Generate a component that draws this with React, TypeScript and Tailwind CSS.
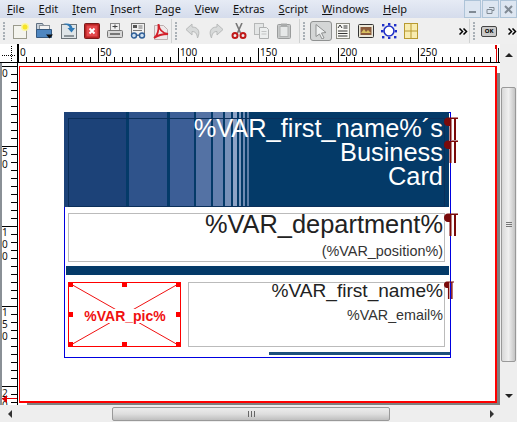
import React from "react";

const menus: [string, string][] = [
  ["F", "ile"], ["E", "dit"], ["I", "tem"], ["I", "nsert"], ["P", "age"], ["V", "iew"],
  ["E", "xtras"], ["S", "cript"], ["W", "indows"], ["H", "elp"],
];

function Grip() {
  return (
    <div className="w-[3px] h-[22px] mx-[3px] flex flex-col justify-between py-[2px]">
      {[0, 1, 2, 3, 4, 5].map((i) => (
        <div key={i} className="w-[2px] h-[2px] bg-[#a9b0b6]" />
      ))}
    </div>
  );
}

function NewIcon() {
  return (
    <svg width="16" height="16" viewBox="0 0 16 16">
      <rect x="0.5" y="2.5" width="13" height="13" fill="#f4f4ee" stroke="#9a9a8c" />
      <circle cx="12" cy="4" r="4" fill="#fbf6a0" />
      <circle cx="12" cy="4" r="2.500" fill="#f6e428" />
    </svg>
  );
}
function OpenIcon() {
  return (
    <svg width="18" height="16" viewBox="0 0 18 16">
      <path d="M.5 .5h6l1 2h5v5h-12z" fill="#c8d0d8" stroke="#5f6f80" />
      <rect x="3.500" y="2.500" width="10" height="5" fill="#f2f2f2" stroke="#8a9299" />
      <path d="M.5 6.500h15v8h-15z" fill="#4e86c0" stroke="#34587f" />
      <path d="M10 11.500h7l-3.500 4z" fill="#111" />
    </svg>
  );
}
function SaveIcon() {
  return (
    <svg width="16" height="16" viewBox="0 0 16 16">
      <rect x="0.5" y="1.5" width="15" height="14" fill="#dfe5e8" stroke="#6b7378" />
      <rect x="3" y="12" width="10" height="2" fill="#8b9499" />
      <path d="M2 1c6-1.500 9 .5 9.500 4H14l-3.500 4.500L6.500 5h2C8.500 3 6 1.500 2 1z" fill="#2f79b5" />
    </svg>
  );
}
function CloseDocIcon() {
  return (
    <svg width="16" height="16" viewBox="0 0 16 16">
      <rect x="0.5" y="0.5" width="15" height="15" rx="1" fill="#b92323" stroke="#7a1a1a" />
      <rect x="2.5" y="2.5" width="11" height="11" fill="#e4484c" />
      <path d="M5.500 5.500l5 5M10.500 5.500l-5 5" stroke="#fff" strokeWidth="2" />
    </svg>
  );
}
function PrintIcon() {
  return (
    <svg width="16" height="16" viewBox="0 0 16 16">
      <rect x="3.5" y="0.5" width="9" height="7" fill="#f0f0f0" stroke="#8a8a8a" />
      <rect x="0.5" y="7.5" width="15" height="7" rx="1" fill="#d8d8d8" stroke="#777" />
      <path d="M5.500 3.500h5M8 1.500v4" stroke="#444" />
      <rect x="3" y="10" width="10" height="2" fill="#777" />
    </svg>
  );
}
function PreviewIcon() {
  return (
    <svg width="16" height="16" viewBox="0 0 16 16">
      <rect x="1.500" y="0.500" width="13" height="12" fill="#f0f0f0" stroke="#777" />
      <rect x="3" y="2" width="4" height="3" fill="#555" />
      <path d="M8.500 3h4M8.500 5h4M3 7.500h9" stroke="#777" />
      <circle cx="4" cy="12.500" r="2.500" fill="#cfe0f0" stroke="#2f5f98" strokeWidth="1.400" />
      <circle cx="12" cy="12.500" r="2.500" fill="#cfe0f0" stroke="#2f5f98" strokeWidth="1.400" />
      <path d="M6 12h4" stroke="#2f5f98" />
    </svg>
  );
}
function PdfIcon() {
  return (
    <svg width="16" height="17" viewBox="0 0 16 17">
      <path d="M1.500 2.500h9l4 4v10h-13z" fill="#eee8e8" stroke="#bcaeae" />
      <path d="M1 15c3-2 5-6 4.500-14C6 6 9 10 15 11c-5 0-10 1-14 4z" fill="none" stroke="#d3202a" strokeWidth="1.800" />
    </svg>
  );
}
function ArrowIcon({ flip }: { flip?: boolean }) {
  return (
    <svg width="16" height="16" viewBox="0 0 16 16" className={flip ? "-scale-x-100" : ""}>
      <path d="M7 1L1 6.500 7 12V8.500c3 0 5 1.500 5.500 6.500 3-6 1-11-5.500-11z" fill="#d8dada" stroke="#b8baba" />
    </svg>
  );
}
function CutIcon() {
  return (
    <svg width="16" height="16" viewBox="0 0 16 16">
      <path d="M5 0l4.500 10M11 0L6.500 10" stroke="#777" strokeWidth="1.600" />
      <circle cx="4" cy="12.500" r="2.500" fill="none" stroke="#c01818" strokeWidth="2" />
      <circle cx="12" cy="12.500" r="2.500" fill="none" stroke="#c01818" strokeWidth="2" />
    </svg>
  );
}
function CopyIcon() {
  return (
    <svg width="16" height="16" viewBox="0 0 16 16">
      <rect x="0.500" y="0.500" width="9" height="11" fill="#e4e6e6" stroke="#b6b8b8" />
      <path d="M5.500 4.500h7l2 2v9h-9z" fill="#eceeee" stroke="#aeb0b0" />
      <path d="M7.500 8.500h5M7.500 11h5" stroke="#c2c4c4" />
    </svg>
  );
}
function PasteIcon() {
  return (
    <svg width="14" height="16" viewBox="0 0 14 16">
      <rect x="0.500" y="1.500" width="13" height="14" rx="1" fill="#c6c8c8" stroke="#9a9c9c" />
      <rect x="3" y="3.500" width="8" height="10" fill="#e6e8e8" stroke="#b0b2b2" />
      <rect x="4" y="0.500" width="6" height="3" fill="#a8aaaa" />
    </svg>
  );
}
function SelectIcon() {
  return (
    <svg width="14" height="16" viewBox="0 0 14 16">
      <path d="M2 1.500l10 8-4.500.500 2.500 5-2 1-2.500-5L2 13.500z" fill="#eef0f0" stroke="#8e9090" />
    </svg>
  );
}
function TextFrameIcon() {
  return (
    <svg width="14" height="16" viewBox="0 0 14 16">
      <rect x="0.500" y="0.500" width="13" height="15" fill="#f8f8f4" stroke="#8a8a80" />
      <path d="M2 5l2-3 2 3M7.500 3h4M7.500 5h4M2 8h9.500M2 10.500h9.500M2 13h9.500" fill="none" stroke="#333" />
    </svg>
  );
}
function ImageFrameIcon() {
  return (
    <svg width="16" height="14" viewBox="0 0 16 14">
      <rect x="0.500" y="0.500" width="15" height="13" rx="1" fill="#ece8d8" stroke="#333" />
      <rect x="2.500" y="3" width="11" height="8" fill="#8a5a3c" />
      <path d="M3 9l3-4 2 3 2-2 3 3z" fill="#d8c060" />
    </svg>
  );
}
function ShapeIcon() {
  return (
    <svg width="16" height="16" viewBox="0 0 16 16">
      <circle cx="8" cy="8" r="5" fill="#fff" stroke="#2030c8" strokeWidth="1.600" />
      {[[1, 1], [7, 0], [13, 1], [0, 7], [14, 7], [1, 13], [7, 14], [13, 13]].map(([x, y], i) => (
        <rect key={i} x={x} y={y} width="2.400" height="2.400" fill="#2030c8" />
      ))}
    </svg>
  );
}
function TableIcon() {
  return (
    <svg width="14" height="16" viewBox="0 0 14 16">
      <rect x="0.500" y="0.500" width="13" height="15" fill="#f8ecb0" stroke="#b89a30" />
      <path d="M7 .500v15M.500 8h13" stroke="#b89a30" />
    </svg>
  );
}

function Chevrons() {
  return (
    <svg width="9" height="7" viewBox="0 0 9 7">
      <path d="M.5 .5L3.500 3.500 .5 6.500M4.500 .5L7.500 3.500 4.500 6.500" fill="none" stroke="#000" strokeWidth="1.500" />
    </svg>
  );
}

function Toolbar() {
  return (
    <div className="h-[26px] flex items-center bg-[#efefef]">
      <Grip />
      <div className="flex items-center gap-[7px] pl-[4px] w-[163px]">
        <NewIcon /><OpenIcon /><SaveIcon /><CloseDocIcon /><PrintIcon /><PreviewIcon /><PdfIcon />
      </div>
      <div className="w-px h-[24px] bg-[#d0d2d2]" />
      <Grip />
      <div className="flex items-center gap-[7px] pl-[4px] w-[118px]">
        <ArrowIcon /><ArrowIcon flip /><CutIcon /><CopyIcon /><PasteIcon />
      </div>
      <div className="w-px h-[24px] bg-[#d0d2d2]" />
      <Grip />
      <div className="flex items-center pl-[1px] w-[161px]">
        <div className="w-[22px] h-[20px] rounded-[3px] border border-[#8f9191] bg-[#d4d6d6] flex items-center justify-center mr-[4px]">
          <SelectIcon />
        </div>
        <TextFrameIcon />
        <div className="ml-[8px]"><ImageFrameIcon /></div>
        <div className="ml-[7px]"><ShapeIcon /></div>
        <div className="ml-[7px]"><TableIcon /></div>
        <div className="ml-[41px] flex"><Chevrons /></div>
      </div>
      <div className="w-px h-[24px] bg-[#d0d2d2]" />
      <Grip />
      <div className="w-[16px] h-[11px] rounded-[2px] border border-[#444] bg-[#c9c9c9] ml-[2px] text-[6px] font-bold leading-[9px] text-center text-black">OK</div>
      <div className="ml-[11px] flex"><Chevrons /></div>
    </div>
  );
}

function WindowButtons() {
  return (
    <div className="flex gap-px self-start">
      {["min", "restore", "close"].map((b) => (
        <div key={b} className="w-[17px] h-[18px] border border-[#aec4d8] bg-[#dde6f1] flex items-center justify-center">
          <svg width="9" height="9" viewBox="0 0 9 9">
            {b === "min" && <rect x="1" y="6" width="7" height="2" fill="#808a94" />}
            {b === "restore" && <path d="M3 2.500h5v3H6M1 4.500h5v4H1z" fill="none" stroke="#808a94" />}
            {b === "close" && <path d="M1 1l7 7M8 1L1 8" stroke="#808a94" strokeWidth="2" />}
          </svg>
        </div>
      ))}
    </div>
  );
}

function MenuBar() {
  return (
    <div className="h-[18px] flex justify-between bg-gradient-to-b from-[#e6ebf5] to-[#d5dcec]">
      <div className="flex gap-[14px] pl-[7px] pt-[1px] text-[11px] leading-[15px] text-[#111]">
        {menus.map(([k, rest]) => (
          <span key={k + rest}>
            <span className="underline">{k}</span>
            {rest}
          </span>
        ))}
      </div>
      <WindowButtons />
    </div>
  );
}

function TopRuler() {
  const ticks = Array.from({ length: 61 }, (_, i) => i);
  return (
    <div className="relative h-[19px] flex-1 bg-white border-b border-black overflow-hidden">
      {ticks.map((i) => (
        <div
          key={i}
          className={`absolute bottom-0 w-px bg-black ${i === 0 ? "h-[18px]" : i % 10 === 0 ? "h-[14px]" : "h-[5px]"}`}
          style={{ left: i * 8 }}
        />
      ))}
      {[0, 50, 100, 150, 200, 250].map((n, i) => (
        <span key={n} className="absolute top-[3px] text-[10px] leading-[10px] text-[#111]" style={{ left: i * 80 + 2 }}>
          {n}
        </span>
      ))}
      <div className="absolute left-[477px] top-[1px] w-[2px] h-[4px] bg-[#e00000]" />
      <div className="absolute left-[478px] top-[1px] w-px h-[17px] bg-[#e00000]" />
    </div>
  );
}

function LeftRuler() {
  const ticks = Array.from({ length: 43 }, (_, i) => i);
  // vertical ruler numbers stack one digit per line
  const labels: [number, string][] = [[4, "0"], [83, "5\n0"], [163, "1\n0\n0"], [243, "1\n5\n0"], [324, "2\n0"]];
  return (
    <div className="relative w-[18px] bg-white border-l-2 border-l-[#8a9096] border-r border-r-black overflow-hidden">
      {ticks.map((i) => (
        <div
          key={i}
          className={`absolute right-0 h-px bg-black ${i % 10 === 0 ? "w-[15px]" : "w-[6px]"}`}
          style={{ top: i * 8 + 3 }}
        />
      ))}
      {labels.map(([top, digits]) => (
        <div key={top} className="absolute left-0 whitespace-pre-line text-[10px] leading-[12px] text-[#111]" style={{ top }}>
          {digits}
        </div>
      ))}
      <div className="absolute left-0 top-[335px] w-[15px] h-px bg-[#e00000]" />
      <div className="absolute left-0 top-[332px] w-0 h-0 border-y-[4px] border-y-transparent border-r-[5px] border-r-[#e00000]" />
    </div>
  );
}

function Pilcrow({ className, small }: { className: string; small?: boolean }) {
  return (
    <svg
      width={small ? 10 : 14}
      height={small ? 18 : 23}
      viewBox="0 0 14 23"
      preserveAspectRatio="none"
      className={`absolute ${className}`}
    >
      <path d="M4 .5H14V2H12V23H10V2H7.500V23H5.500V9H4C1.500 9 0 7 0 4.700 0 2.300 1.700 .5 4 .5Z" fill="#7a0a0a" />
    </svg>
  );
}

function CardHeader() {
  const stripes: [number, number, string][] = [
    [64, 126, "#1c4278"], [129, 167, "#2f538b"], [170, 194, "#3c5e96"], [196, 211, "#5472a4"], [213, 223, "#6480ae"],
    [225, 231, "#7790b8"], [233, 237, "#8ea3c6"], [239, 241, "#7f98bd"], [243, 245, "#6f8bb4"], [247, 249, "#5f7ea8"],
  ];
  return (
    <div className="absolute left-[64px] top-[112px] w-[385px] h-[95px] bg-[#043a68] overflow-hidden">
      {stripes.map(([start, end, c]) => (
        <div key={start} className="absolute top-0 bottom-0" style={{ left: start - 64, width: end - start, background: c }} />
      ))}
      <div className="absolute left-[4px] top-[6px] right-[4px] bottom-0 border border-[#0b2f5a]" />
      <div className="absolute right-[6px] top-[4px] text-right text-[25.4px] leading-[24px] text-white font-['Liberation_Sans']">
        <div>%VAR_first_name%´s</div>
        <div>Business</div>
        <div>Card</div>
      </div>
    </div>
  );
}

function PicFrame() {
  const handles = [
    "left-0 top-0", "left-[54px] top-0", "left-[108px] top-0",
    "left-0 top-[30px]", "left-[108px] top-[30px]",
    "left-0 top-[60px]", "left-[54px] top-[60px]", "left-[108px] top-[60px]",
  ];
  return (
    <div className="absolute left-[68px] top-[282px] w-[113px] h-[65px] border border-[#ff0000] bg-white">
      <svg className="absolute inset-0" width="111" height="63" viewBox="0 0 111 63">
        <path d="M0 0L111 63M111 0L0 63" stroke="#f01010" strokeWidth="1" />
      </svg>
      <div className="absolute left-[14px] top-[26px] w-[84px] bg-white text-center text-[14px] leading-[14px] font-bold text-[#f01010] font-['Liberation_Sans']">
        %VAR_pic%
      </div>
      {handles.map((h) => (
        <div key={h} className={`absolute ${h} -ml-px -mt-px w-[5px] h-[5px] bg-[#ff0000]`} />
      ))}
    </div>
  );
}

function Page() {
  return (
    <div className="relative flex-1 bg-white overflow-hidden">
      {/* page objects are placed in window coordinates */}
      <div className="absolute left-[-18px] top-[-63px] w-[517px] h-[422px]">
        <div className="absolute left-[27px] top-[73px] w-[473px] h-[332px] bg-[#808080]" />
        <div className="absolute left-[19px] top-[66px] w-[478px] h-[337px] bg-white border border-[#ff0000] border-b-2 border-r-2" />
        <div className="absolute left-[64px] top-[112px] w-[387px] h-[246px] border border-[#0000e0]" />
        <CardHeader />
        <div className="absolute left-[68px] top-[213px] w-[377px] h-[49px] border border-[#bbbbbb]" />
        <div className="absolute right-[74px] top-[209px] text-[25.4px] leading-[30px] text-[#222] font-['Liberation_Sans']">
          %VAR_department%
        </div>
        <div className="absolute right-[74px] top-[243px] text-[14.4px] leading-[17px] text-[#333] font-['Liberation_Sans']">
          (%VAR_position%)
        </div>
        <div className="absolute left-[66px] top-[266px] w-[383px] h-[9px] bg-[#043a68]" />
        <PicFrame />
        <div className="absolute left-[188px] top-[282px] w-[257px] h-[65px] border border-[#bbbbbb]" />
        <div className="absolute right-[74px] top-[279px] text-[19.1px] leading-[23px] text-[#222] font-['Liberation_Sans']">
          %VAR_first_name%
        </div>
        <div className="absolute right-[74px] top-[307px] text-[14.3px] leading-[17px] text-[#333] font-['Liberation_Sans']">
          %VAR_email%
        </div>
        <div className="absolute left-[269px] top-[352px] w-[181px] h-[3px] bg-[#1c4f7c]" />
        <Pilcrow className="left-[444px] top-[117px]" />
        <Pilcrow className="left-[444px] top-[140px]" />
        <Pilcrow className="left-[444px] top-[213px]" />
        <Pilcrow small className="left-[444px] top-[281px]" />
      </div>
    </div>
  );
}

function VScroll() {
  return (
    <div className="w-[17px] bg-[#eeeeee] flex flex-col items-center">
      <div className="h-[43px] flex items-start justify-center pt-[9px]">
        <div className="w-0 h-0 border-x-[4px] border-x-transparent border-b-[4px] border-b-[#222]" />
      </div>
      <div className="h-[275px] w-[15px] border border-[#999] rounded-[2px] bg-gradient-to-r from-[#d8d8d8] via-[#f0f0f0] to-[#c4c4c4] flex flex-col items-center justify-center gap-[1px]">
        <div className="h-px w-[6px] bg-[#777]" />
        <div className="h-px w-[6px] bg-[#777]" />
        <div className="h-px w-[6px] bg-[#777]" />
      </div>
      <div className="flex-1 flex items-end pb-[24px]">
        <div className="w-0 h-0 border-x-[4px] border-x-transparent border-t-[4px] border-t-[#222]" />
      </div>
    </div>
  );
}

function HScroll() {
  return (
    <div className="h-[17px] bg-[#eeeeee] flex items-center">
      <div className="w-[12px] flex justify-end">
        <div className="w-0 h-0 border-y-[4px] border-y-transparent border-r-[4px] border-r-[#333]" />
      </div>
      <div className="w-[100px]" />
      <div className="h-[14px] w-[278px] border border-[#999] rounded-[2px] bg-gradient-to-b from-[#ececec] via-[#dedede] to-[#bfbfbf] flex items-center justify-center gap-[2px]">
        <div className="w-px h-[6px] bg-[#666]" />
        <div className="w-px h-[6px] bg-[#666]" />
        <div className="w-px h-[6px] bg-[#666]" />
      </div>
      <div className="w-[104px] flex justify-end">
        <div className="w-0 h-0 border-y-[4px] border-y-transparent border-l-[4px] border-l-[#333]" />
      </div>
    </div>
  );
}

export default function App() {
  return (
    <div className="w-[517px] h-[422px] flex flex-col overflow-hidden bg-white font-['Noto_Sans',sans-serif]">
      <MenuBar />
      <Toolbar />
      <div className="flex-1 flex min-h-0">
        <div className="flex-1 flex flex-col min-w-0">
          <div className="h-[19px] flex">
            <div className="relative w-[18px] border-r border-b border-black bg-white">
              <div className="absolute left-[2px] top-[11px] w-[13px] border-t border-dotted border-black" />
              <div className="absolute left-[11px] top-[2px] h-[15px] border-l border-dotted border-black" />
            </div>
            <TopRuler />
          </div>
          <div className="flex-1 flex min-h-0">
            <LeftRuler />
            <Page />
          </div>
          <HScroll />
        </div>
        <VScroll />
      </div>
    </div>
  );
}
